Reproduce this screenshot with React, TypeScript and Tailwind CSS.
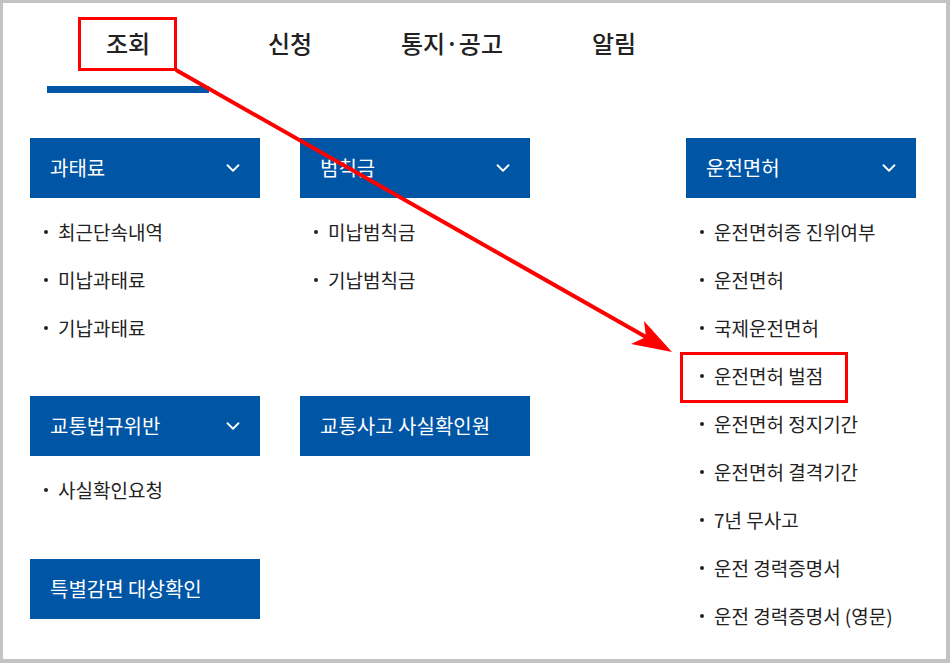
import { ChevronDown } from "lucide-react"

const font = { fontFamily: '"Noto Sans CJK KR", "Noto Sans", sans-serif' }

type Item = string

function Header({ label, chevron = true }: { label: string; chevron?: boolean }) {
  return (
    <div className="h-[60px] w-[230px] bg-[#0055a5] flex items-center justify-between pl-5 pr-[16px] text-white text-[20px]">
      <span>{label}</span>
      {chevron && <ChevronDown className="w-[22px] h-[22px]" strokeWidth={2} />}
    </div>
  )
}

function List({ items }: { items: Item[] }) {
  return (
    <ul className="mt-[10px]">
      {items.map((it) => (
        <li key={it} className="h-[48px] flex items-center pl-[14px] text-[19px] text-[#222]">
          <span className="w-[4px] h-[4px] rounded-full bg-[#222] mr-[10px] shrink-0" />
          {it}
        </li>
      ))}
    </ul>
  )
}

export default function App() {
  const tabs = ["조회", "신청", "통지·공고", "알림"]

  return (
    <div style={font} className="relative w-[950px] h-[663px] bg-white border-[3px] border-r-4 border-b-4 border-[#c3c3c3] overflow-hidden">
      {/* tabs */}
      <div className="flex pl-[44px] pt-[12px]">
        {tabs.map((t, i) => (
          <div key={t} className="w-[162px] flex flex-col items-center">
            <div className="h-[56px] flex items-center text-[24px] font-medium text-[#222]">{t}</div>
            <div className={`mt-[15px] h-[7px] w-full ${i === 0 ? "bg-[#0055a5]" : ""}`} />
          </div>
        ))}
      </div>

      {/* menus */}
      <div className="flex pl-[27px] mt-[45px]">
        <div className="w-[230px]">
          <Header label="과태료" />
          <List items={["최근단속내역", "미납과태료", "기납과태료"]} />
          <div className="mt-[44px]">
            <Header label="교통법규위반" />
          </div>
          <List items={["사실확인요청"]} />
          <div className="mt-[45px]">
            <Header label="특별감면 대상확인" chevron={false} />
          </div>
        </div>
        <div className="w-[230px] ml-[40px]">
          <Header label="범칙금" />
          <List items={["미납범칙금", "기납범칙금"]} />
          <div className="mt-[92px]">
            <Header label="교통사고 사실확인원" chevron={false} />
          </div>
        </div>
        <div className="w-[230px] ml-[156px]">
          <Header label="운전면허" />
          <List
            items={[
              "운전면허증 진위여부",
              "운전면허",
              "국제운전면허",
              "운전면허 벌점",
              "운전면허 정지기간",
              "운전면허 결격기간",
              "7년 무사고",
              "운전 경력증명서",
              "운전 경력증명서 (영문)",
            ]}
          />
        </div>
      </div>

      {/* annotations */}
      <div className="absolute left-[75px] top-[14px] w-[99px] h-[54px] border-[3px] border-[#ff0000]" />
      <div className="absolute left-[677px] top-[349px] w-[168px] h-[51px] border-[3px] border-[#ff0000]" />
      <svg className="absolute left-[-3px] top-[-3px]" width="950" height="663" viewBox="0 0 950 663">
        <line x1="176" y1="70" x2="646" y2="337" stroke="#ff0000" strokeWidth="4" />
        <polygon points="672,352 631,344 646,337 644,321" fill="#ff0000" />
      </svg>
    </div>
  )
}
